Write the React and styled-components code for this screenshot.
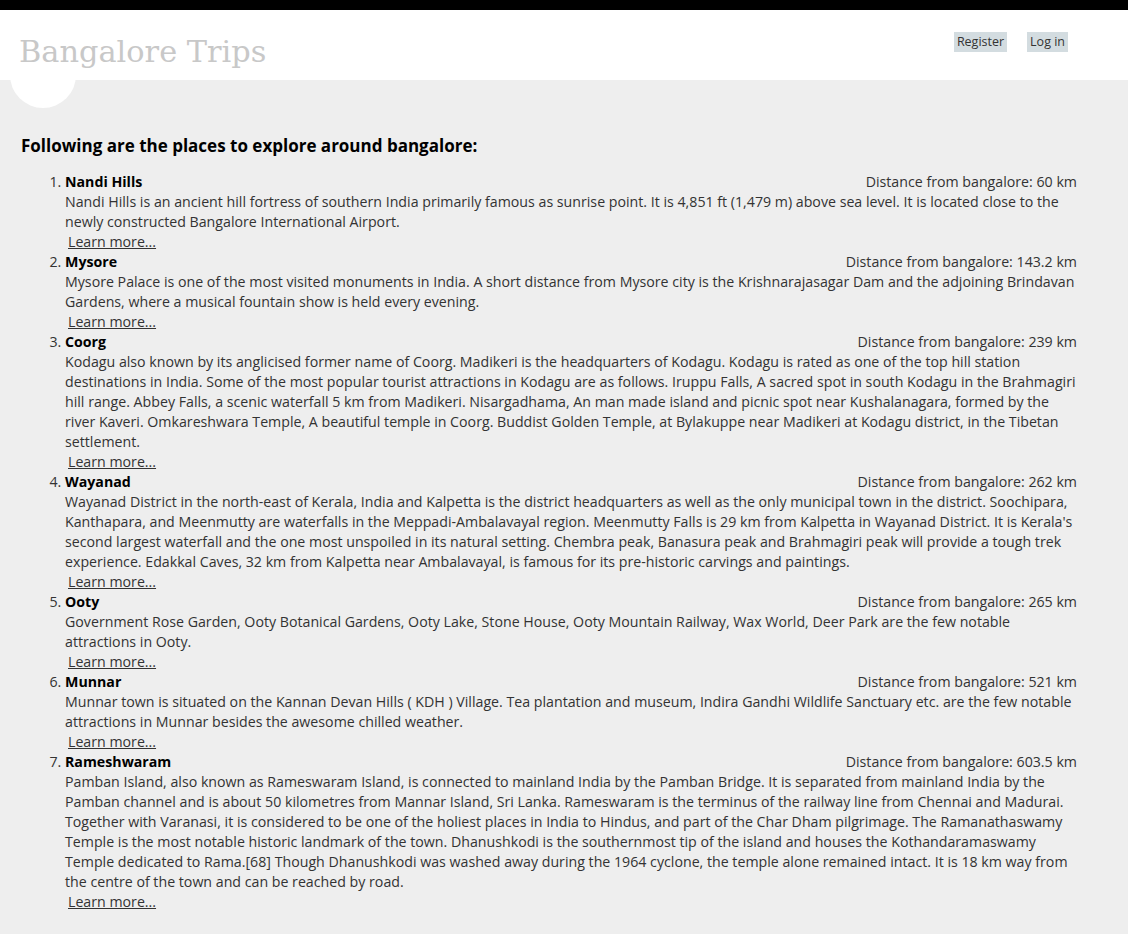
import React from 'react';
import styled, { createGlobalStyle } from 'styled-components';

const GlobalStyle = createGlobalStyle`
  html, body {
    margin: 0;
    padding: 0;
    background: #eeeeee;
  }
  body {
    border-top: 10px solid #000;
    color: #333;
    font-family: "Open Sans", "Noto Sans", sans-serif;
    font-size: 14.2px;
  }
`;

const Header = styled.header`
  position: relative;
  background: #fff;
  height: 70px;
  display: flex;
  justify-content: space-between;
  align-items: flex-start;
  padding: 0 60px 0 19px;
`;

const Accent = styled.div`
  position: absolute;
  left: 10px;
  top: 32px;
  width: 66px;
  height: 66px;
  border-radius: 50%;
  background: #fff;
`;

const SiteTitle = styled.h1`
  position: relative;
  z-index: 1;
  margin: 0;
  padding-top: 22px;
  color: #c8c8c8;
  font-family: "DejaVu Serif", serif;
  font-weight: normal;
  font-size: 30.4px;
  line-height: 40px;
`;

const Login = styled.nav`
  display: flex;
  gap: 20px;
  padding-top: 22px;
`;

const LoginLink = styled.a`
  background: #d3dce0;
  color: #333;
  font-size: 12.5px;
  line-height: 20px;
  padding: 0 3px;
  text-decoration: none;
`;

const Main = styled.main`
  position: relative;
  padding: 54px 51px 24px 21px;
`;

const Heading = styled.h3`
  margin: 0 0 14px;
  color: #000;
  font-size: 17px;
  font-weight: bold;
  line-height: 24px;
`;

const Places = styled.ol`
  margin: 0;
  padding-left: 44px;
  line-height: 20px;
`;

const Place = styled.li`
  padding: 0;
`;

const PlaceHead = styled.div`
  display: flex;
  justify-content: space-between;
`;

const Name = styled.b`
  color: #000;
`;

const Distance = styled.span`
  color: #333;
`;

const Desc = styled.div``;

const LearnMore = styled.a`
  display: inline-block;
  margin-left: 3px;
  color: #333;
  text-decoration: underline;
`;

const places = [
  {
    name: 'Nandi Hills',
    km: '60',
    text: 'Nandi Hills is an ancient hill fortress of southern India primarily famous as sunrise point. It is 4,851 ft (1,479 m) above sea level. It is located close to the newly constructed Bangalore International Airport.',
  },
  {
    name: 'Mysore',
    km: '143.2',
    text: 'Mysore Palace is one of the most visited monuments in India. A short distance from Mysore city is the Krishnarajasagar Dam and the adjoining Brindavan Gardens, where a musical fountain show is held every evening.',
  },
  {
    name: 'Coorg',
    km: '239',
    text: 'Kodagu also known by its anglicised former name of Coorg. Madikeri is the headquarters of Kodagu. Kodagu is rated as one of the top hill station destinations in India. Some of the most popular tourist attractions in Kodagu are as follows. Iruppu Falls, A sacred spot in south Kodagu in the Brahmagiri hill range. Abbey Falls, a scenic waterfall 5 km from Madikeri. Nisargadhama, An man made island and picnic spot near Kushalanagara, formed by the river Kaveri. Omkareshwara Temple, A beautiful temple in Coorg. Buddist Golden Temple, at Bylakuppe near Madikeri at Kodagu district, in the Tibetan settlement.',
  },
  {
    name: 'Wayanad',
    km: '262',
    text: "Wayanad District in the north-east of Kerala, India and Kalpetta is the district headquarters as well as the only municipal town in the district. Soochipara, Kanthapara, and Meenmutty are waterfalls in the Meppadi-Ambalavayal region. Meenmutty Falls is 29 km from Kalpetta in Wayanad District. It is Kerala's second largest waterfall and the one most unspoiled in its natural setting. Chembra peak, Banasura peak and Brahmagiri peak will provide a tough trek experience. Edakkal Caves, 32 km from Kalpetta near Ambalavayal, is famous for its pre-historic carvings and paintings.",
  },
  {
    name: 'Ooty',
    km: '265',
    text: 'Government Rose Garden, Ooty Botanical Gardens, Ooty Lake, Stone House, Ooty Mountain Railway, Wax World, Deer Park are the few notable attractions in Ooty.',
  },
  {
    name: 'Munnar',
    km: '521',
    text: 'Munnar town is situated on the Kannan Devan Hills ( KDH ) Village. Tea plantation and museum, Indira Gandhi Wildlife Sanctuary etc. are the few notable attractions in Munnar besides the awesome chilled weather.',
  },
  {
    name: 'Rameshwaram',
    km: '603.5',
    text: 'Pamban Island, also known as Rameswaram Island, is connected to mainland India by the Pamban Bridge. It is separated from mainland India by the Pamban channel and is about 50 kilometres from Mannar Island, Sri Lanka. Rameswaram is the terminus of the railway line from Chennai and Madurai. Together with Varanasi, it is considered to be one of the holiest places in India to Hindus, and part of the Char Dham pilgrimage. The Ramanathaswamy Temple is the most notable historic landmark of the town. Dhanushkodi is the southernmost tip of the island and houses the Kothandaramaswamy Temple dedicated to Rama.[68] Though Dhanushkodi was washed away during the 1964 cyclone, the temple alone remained intact. It is 18 km way from the centre of the town and can be reached by road.',
  },
];

const App = () => {
  return (
    <>
      <GlobalStyle />
      <Header>
        <Accent />
        <SiteTitle>Bangalore Trips</SiteTitle>
        <Login>
          <LoginLink href="#">Register</LoginLink>
          <LoginLink href="#">Log in</LoginLink>
        </Login>
      </Header>
      <Main>
        <Heading>Following are the places to explore around bangalore:</Heading>
        <Places>
          {places.map((p) => (
            <Place key={p.name}>
              <PlaceHead>
                <Name>{p.name}</Name>
                <Distance>Distance from bangalore: {p.km} km</Distance>
              </PlaceHead>
              <Desc>{p.text}</Desc>
              <LearnMore href="#">Learn more...</LearnMore>
            </Place>
          ))}
        </Places>
      </Main>
    </>
  );
};

export default App;
